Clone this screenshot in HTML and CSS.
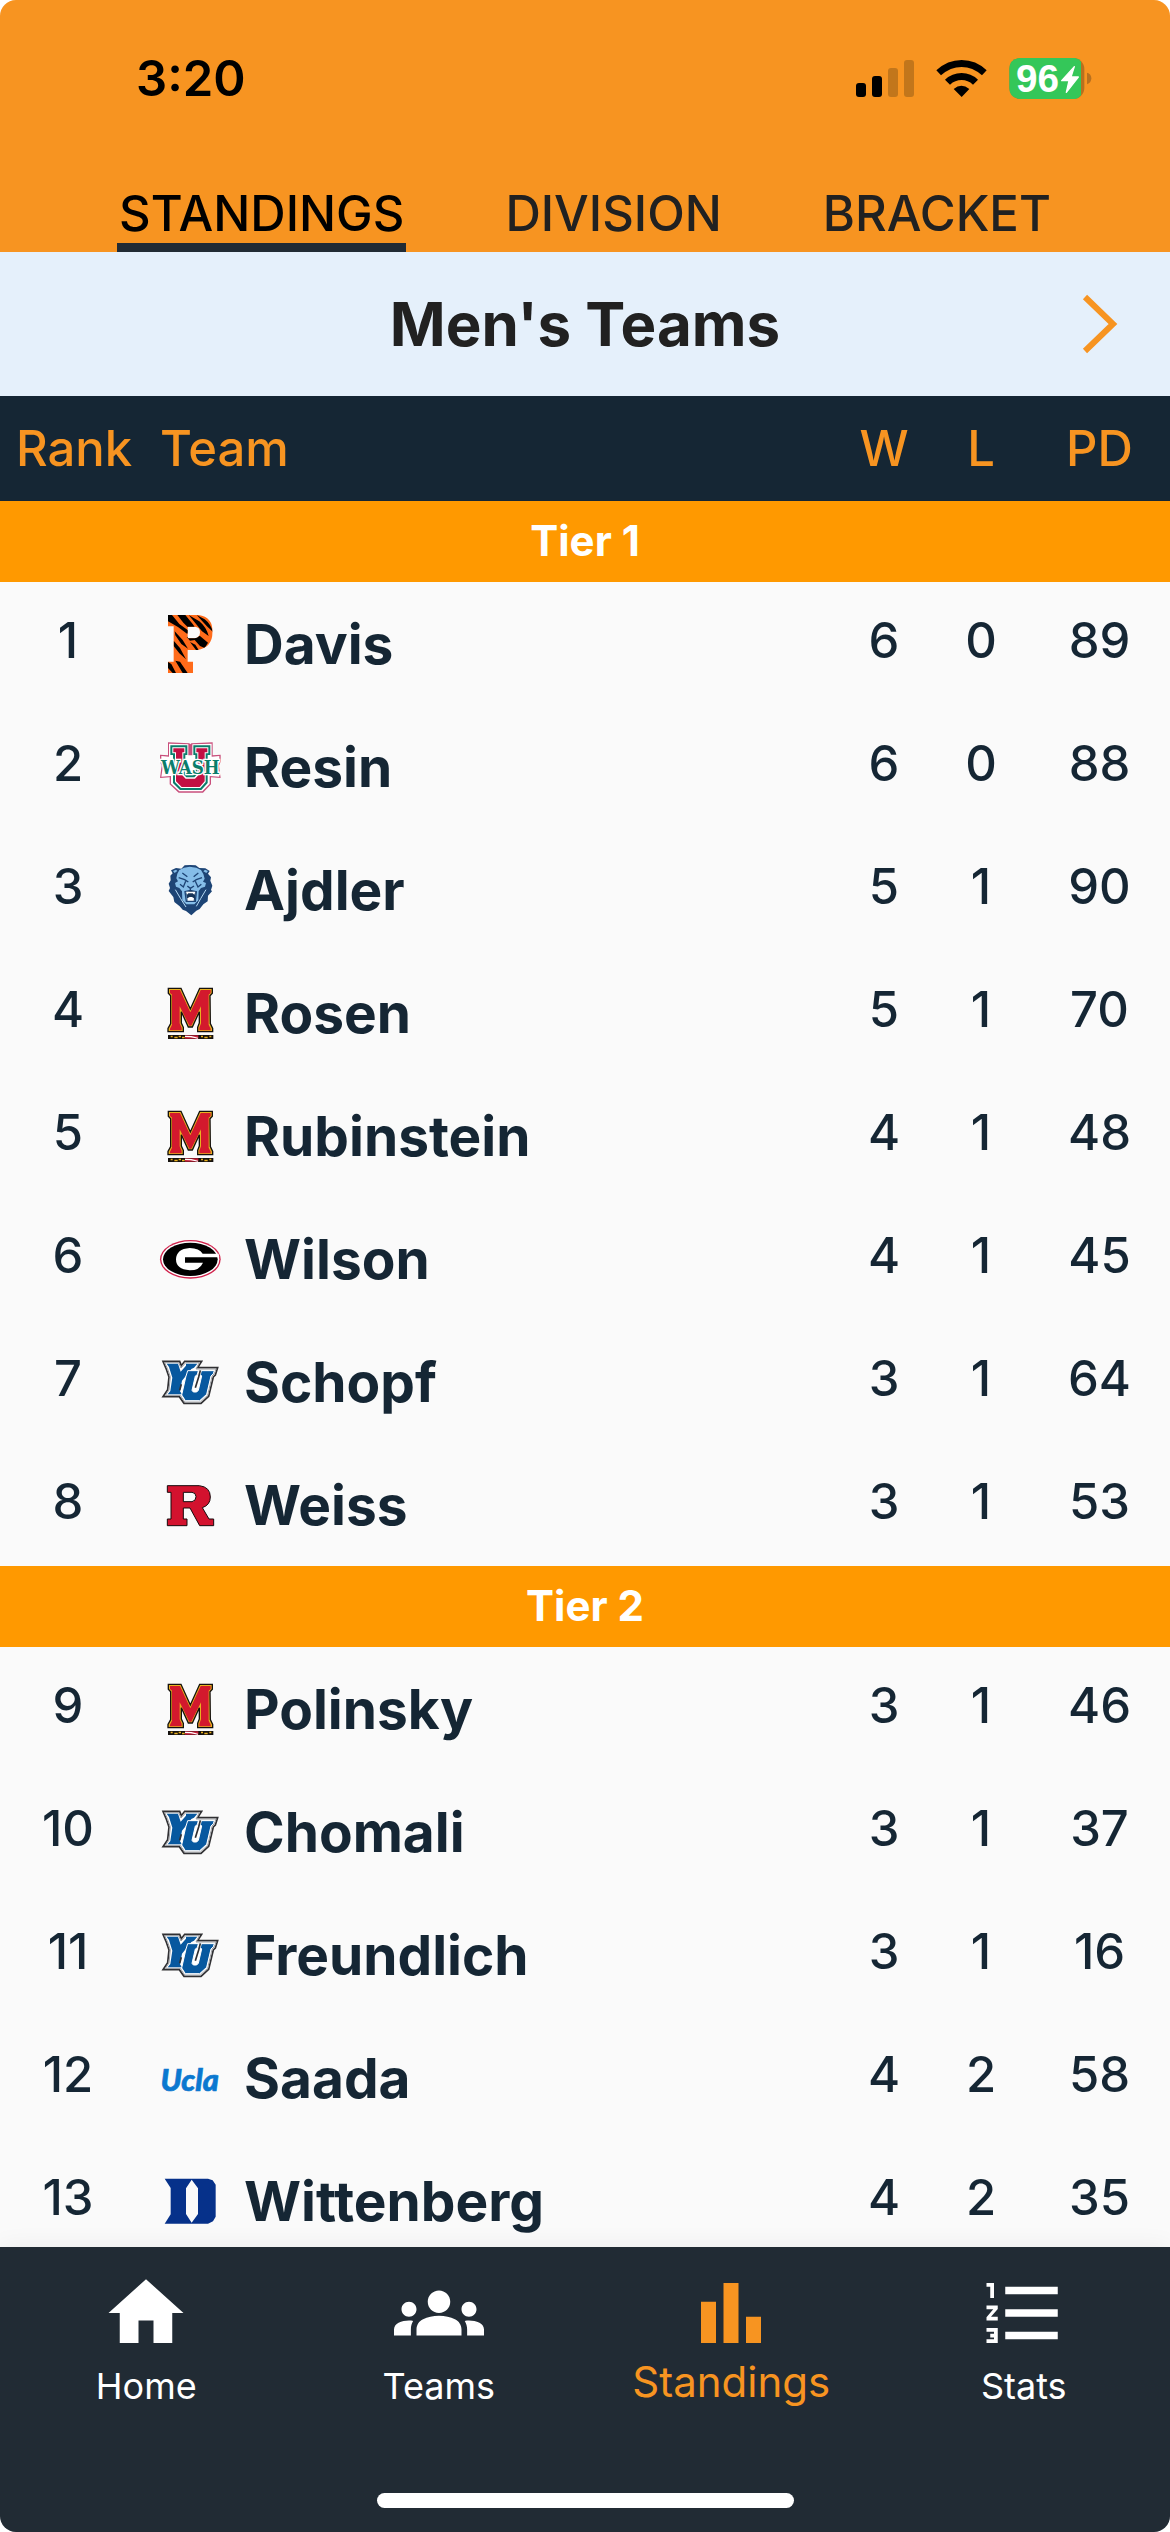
FILE: index.html
```html
<!DOCTYPE html>
<html lang="en">
<head>
<meta charset="utf-8">
<meta name="viewport" content="width=device-width, initial-scale=1">
<title>Standings</title>
<link rel="stylesheet" href="styles.css">
</head>
<body>
<svg class="sprite" aria-hidden="true">
  <symbol id="lion" viewBox="24 21 192 192">
    <path fill="#1d4475" d="M121 42L137 43L148 51L166 52L179 60L174 68L183 79L181 89L187 104L183 117L186 121L174 134L173 151L160 160L149 174L139 179L124 193L108 180L98 176L89 166L73 153L70 138L56 120L60 111L56 98L62 88L61 74L68 67L63 58L78 51L94 53L104 43Z"/>
    <path fill="#85bde8" d="M88 57L102 50L119 47L139 50L153 57L160 69L164 83L159 92L168 96L165 107L153 111L146 120L145 148L133 160H109L97 148L96 121L88 111L78 107L75 96L84 91L79 82L82 68ZM69 60L78 56L82 60L74 66ZM174 60L165 56L160 61L169 66Z"/>
    <g fill="none" stroke="#1d4475" stroke-width="4">
      <path d="M86 80L104 86L115 93M156 80L139 86L128 93M97 66L112 77M145 66L131 77M112 105L121 112L132 105M121 111V120M107 91L100 108L90 100M136 91L144 108L154 100M105 122L121 118L139 122L136 151H109Z"/>
    </g>
    <path fill="#173559" d="M108 123L122 119L137 123L134 149H112Z"/>
    <path fill="#fff" d="M108 122H136L133 131L128 127H115L111 131ZM112 142L119 138H126L132 142L131 149H113Z"/>
    <path fill="none" stroke="#b5d9f3" stroke-width="3" d="M76 116L92 143L108 168M168 116L152 143L139 166"/>
  </symbol>
  <symbol id="maryland" viewBox="24 390 192 192">
    <path fill="#e9b11f" stroke="#15110d" stroke-width="4" d="M55 412H93L121 474L149 412H187V427L180 434L181 518L188 532V542H143V529L148 516V482L127 528H115L94 482V516L100 529V542H54V532L62 518V434L55 427Z"/>
    <path fill="#d3192d" d="M60 417H90L121 484L152 417H182V426L176 431V521L182 533V538H148V530L153 517V466L124 524H118L89 466V517L95 530V538H60V533L66 521V431L60 426Z"/>
    <path fill="#15110d" d="M54 552H190V564H54Z"/>
    <path fill="#e9b11f" d="M62 554h6v5h-6zM73 557h10v5H73zM86 554h7v5h-7zM96 557h8v5h-8zM153 554h6v5h-6zM163 557h10v5h-10zM178 554h6v5h-6z"/>
    <path fill="#c9203a" d="M105 553H145V563H105Z"/>
    <path fill="#fff" d="M105 554L124 555L144 560V563L122 559L105 558Z"/>
  </symbol>
  <symbol id="yeshiva" viewBox="24 27 192 192">
    <path fill="#fff" stroke="#303033" stroke-width="5" d="M39 61H89L94 74L104 61H155L143 80H203L196 102L190 108L176 166L153 187H102L88 167H39L53 146L57 108L48 82Z"/>
    <path fill="none" stroke="#9a9da2" stroke-width="3" d="M44 65H86L93 81L107 65H148L138 84H198L192 99L186 105L173 163L151 183H104L91 163H46L57 147L61 107L52 82Z"/>
    <path fill="#07589f" d="M50 68H84L92 92L108 74V68H142L132 80L124 84L96 119L90 151L96 160H53L61 150L67 110L57 78Z"/>
    <path fill="#07589f" stroke="#fff" stroke-width="3" d="M113 89H145L142 101L136 105L126 148L130 153H140L145 148L155 105L151 101L154 89H193L190 98L183 105L170 160L149 179H106L95 162L108 105L110 99Z"/>
    <path fill="none" stroke="#303033" stroke-width="5" d="M151 88L146 108L136 140M94 130L89 148"/>
  </symbol>
</svg>

<div class="app">
  <header class="top">
    <div class="status">
      <span class="time">3:20</span>
      <svg class="status-icons" viewBox="48 51 708 123" role="img" aria-label="Signal, Wi-Fi, battery 96 percent charging">
        <rect x="48" y="126" width="30" height="42" rx="9"/>
        <rect x="96" y="105" width="30" height="63" rx="9"/>
        <g fill="#c2761b">
          <rect x="144" y="81" width="30" height="87" rx="9"/>
          <rect x="192" y="57" width="30" height="111" rx="9"/>
        </g>
        <path d="M289 88Q322 57 365 57Q408 57 440 88L426 103Q398 78 365 78Q331 78 303 103ZM315 116Q336 96 365 96Q393 96 414 116L399 131Q384 117 365 117Q345 117 330 131ZM341 144Q364 125 388 144L365 168Z"/>
        <rect x="508" y="51" width="225" height="123" rx="33" fill="#b8701f"/>
        <path fill="#34c759" d="M541 51H705Q717 53 723 62V163Q717 172 705 174H541Q508 172 508 141V84Q508 53 541 51Z"/>
        <path fill="#b8701f" d="M741 95Q754 99 754 112Q754 125 741 130Z"/>
        <text class="battery-text" x="528" y="153">96</text>
        <path fill="#fff" stroke="#fff" stroke-width="4" stroke-linejoin="round" d="M703 77L665 119H687L679 154L715 108H693Z"/>
      </svg>
    </div>
    <nav class="tabs" aria-label="Views">
      <a class="tab tab-active" href="#standings" aria-current="page">STANDINGS</a>
      <a class="tab" href="#division">DIVISION</a>
      <a class="tab" href="#bracket">BRACKET</a>
    </nav>
  </header>

  <section class="division">
    <h1>Men's Teams</h1>
    <button class="next" type="button" aria-label="Next division">
      <svg viewBox="0 0 36 60"><path d="M3 3L31 30L3 57"/></svg>
    </button>
  </section>

  <main class="scroll">
    <table class="standings">
      <colgroup><col class="c-rank"><col><col class="c-w"><col class="c-l"><col class="c-pd"></colgroup>
      <thead>
        <tr><th scope="col" class="rank">Rank</th><th scope="col" class="team">Team</th><th scope="col">W</th><th scope="col">L</th><th scope="col">PD</th></tr>
      </thead>
      <tbody>
        <tr class="tier"><th colspan="5" scope="rowgroup">Tier 1</th></tr>
        <tr><td>1</td><td class="team"><div><svg viewBox="24 34 192 192">
          <clipPath id="p-clip"><path clip-rule="evenodd" d="M54 43H146Q188 48 188 95Q186 142 142 148H113V183H129V217H54V183H71V77H54ZM113 78V113H134Q150 112 150 95Q150 79 134 78Z"/></clipPath>
          <g clip-path="url(#p-clip)">
            <path fill="#ff6b1a" d="M50 40H190V220H50Z"/>
            <path d="M54 43H66L88 70L116 90L112 100L84 79L54 62ZM82 43H106L128 70L138 84L116 82L100 66ZM116 43L148 62Q168 78 176 106L156 92L140 72ZM140 43L164 56Q182 70 189 94L170 76ZM110 109L150 106L174 126L164 142L150 136L134 118L120 120ZM120 124L136 132L146 148H138ZM74 92L98 118L114 144L94 130L76 104ZM71 120L90 142L108 176L88 158L71 136ZM76 180L90 183L113 217H98ZM54 184L64 190L78 217H68L54 202Z"/>
          </g></svg>Davis</div></td><td>6</td><td>0</td><td>89</td></tr>
        <tr><td>2</td><td class="team"><div><svg viewBox="24 402 192 192">
          <g stroke-linejoin="miter">
            <path fill="#c94f7c" d="M54 424L118 427L121 430L124 427L188 424V463L212 461V482L207 494L212 531L183 529V550L159 575H86L59 550V529L30 531L35 494L30 482V461L54 463Z"/>
            <path fill="#fff" d="M57 428L115 430V463H127V430L185 428V467L208 465V480L203 494L208 527L179 525V548L157 571H88L63 548V525L34 527L39 494L34 480V465L57 467Z"/>
            <path fill="#0b7d6c" d="M61 433H112V462H106V516L112 522H130L136 516V462H130V433H181V462H173V546L154 567H90L69 546V462H61Z"/>
            <path fill="#fff" d="M67 439H106V457H100V520L109 529H133L142 520V457H136V439H175V457H167V543L151 561H93L75 543V457H67Z"/>
            <path fill="#c20f43" d="M70 442H103V454H97V523L107 533H135L145 523V454H139V442H172V454H164V541L149 558H95L78 541V454H70Z"/>
          </g>
          <text class="wash-text" x="121" y="520" text-anchor="middle">WASH</text></svg>Resin</div></td><td>6</td><td>0</td><td>88</td></tr>
        <tr><td>3</td><td class="team"><div><svg><use href="#lion"/></svg>Ajdler</div></td><td>5</td><td>1</td><td>90</td></tr>
        <tr><td>4</td><td class="team"><div><svg><use href="#maryland"/></svg>Rosen</div></td><td>5</td><td>1</td><td>70</td></tr>
        <tr><td>5</td><td class="team"><div><svg><use href="#maryland"/></svg>Rubinstein</div></td><td>4</td><td>1</td><td>48</td></tr>
        <tr><td>6</td><td class="team"><div><svg viewBox="24 18 192 192">
          <ellipse cx="121" cy="115" rx="91" ry="58" fill="#d0204a"/>
          <ellipse cx="121" cy="115" rx="87" ry="54" fill="#fff"/>
          <ellipse cx="121" cy="115" rx="82" ry="50"/>
          <path fill="#fff" d="M158 98H206L208 109H105V125H159Q149 148 119 148Q78 145 78 115Q79 84 119 81Q148 82 158 98Z"/></svg>Wilson</div></td><td>4</td><td>1</td><td>45</td></tr>
        <tr><td>7</td><td class="team"><div><svg><use href="#yeshiva"/></svg>Schopf</div></td><td>3</td><td>1</td><td>64</td></tr>
        <tr><td>8</td><td class="team"><div><svg viewBox="24 396 192 192">
          <path fill="#d3122e" fill-rule="evenodd" stroke="#17090b" stroke-width="3" d="M52 434H148Q181 438 181 468Q181 492 157 500L177 534H191V554H149L120 501H100V534H111V554H52V534H63V454H52ZM100 454V482H126Q138 480 138 467Q138 455 126 454Z"/></svg>Weiss</div></td><td>3</td><td>1</td><td>53</td></tr>
      </tbody>
      <tbody>
        <tr class="tier"><th colspan="5" scope="rowgroup">Tier 2</th></tr>
        <tr><td>9</td><td class="team"><div><svg><use href="#maryland"/></svg>Polinsky</div></td><td>3</td><td>1</td><td>46</td></tr>
        <tr><td>10</td><td class="team"><div><svg><use href="#yeshiva"/></svg>Chomali</div></td><td>3</td><td>1</td><td>37</td></tr>
        <tr><td>11</td><td class="team"><div><svg><use href="#yeshiva"/></svg>Freundlich</div></td><td>3</td><td>1</td><td>16</td></tr>
        <tr><td>12</td><td class="team"><div><svg viewBox="24 16 192 192">
          <text class="ucla-text" x="119" y="150" text-anchor="middle">Ucla</text></svg>Saada</div></td><td>4</td><td>2</td><td>58</td></tr>
        <tr><td>13</td><td class="team"><div><svg viewBox="24 385 192 192">
          <path fill="#06318a" fill-rule="evenodd" d="M44 414H174L188 419L197 432V528L189 542L174 549H44L62 521V442ZM125 417L108 443V520L125 546L144 520V443Z"/></svg>Wittenberg</div></td><td>4</td><td>2</td><td>35</td></tr>
      </tbody>
    </table>
  </main>

  <footer class="bottom">
    <nav class="menu" aria-label="Main">
      <a href="#home"><svg viewBox="0 0 24 24"><path d="M10 20v-6h4v6h5v-8h3L12 3 2 12h3v8z"/></svg><span>Home</span></a>
      <a href="#teams"><svg viewBox="0 0 24 24"><path d="M12 12.75c1.63 0 3.07.39 4.24.9 1.08.48 1.76 1.56 1.76 2.73V18H6v-1.61c0-1.18.68-2.26 1.76-2.73 1.17-.52 2.61-.91 4.24-.91zM4 13c1.1 0 2-.9 2-2s-.9-2-2-2-2 .9-2 2 .9 2 2 2zm1.13 1.1c-.37-.06-.74-.1-1.13-.1-.99 0-1.93.21-2.78.58C.48 14.9 0 15.62 0 16.43V18h4.5v-1.61c0-.83.23-1.61.63-2.29zM20 13c1.1 0 2-.9 2-2s-.9-2-2-2-2 .9-2 2 .9 2 2 2zm4 3.43c0-.81-.48-1.53-1.22-1.85-.85-.37-1.79-.58-2.78-.58-.39 0-.76.04-1.13.1.4.68.63 1.46.63 2.29V18H24v-1.57zM12 6c1.66 0 3 1.34 3 3s-1.34 3-3 3-3-1.34-3-3 1.34-3 3-3z"/></svg><span>Teams</span></a>
      <a class="current" href="#standings" aria-current="page"><svg viewBox="0 0 24 24"><path d="M4 9h4v11H4zm12 4h4v7h-4zm-6-9h4v16h-4z"/></svg><span>Standings</span></a>
      <a href="#stats"><svg viewBox="0 0 24 24"><path d="M2 17h2v.5H3v1h1v.5H2v1h3v-4H2v1zm1-9h1V4H2v1h1v3zm-1 3h1.8L2 13.1v.9h3v-1H3.2L5 10.9V10H2v1zm5-6v2h14V5H7zm0 14h14v-2H7v2zm0-6h14v-2H7v2z"/></svg><span>Stats</span></a>
    </nav>
    <div class="indicator"></div>
  </footer>
</div>
</body>
</html>
```
FILE: styles.css
```css
* {
  box-sizing: border-box;
}

body {
  margin: 0;
  background: #fff;
  color: #152634;
  font-family: Inter, "Liberation Sans", sans-serif;
}

a {
  color: inherit;
  text-decoration: none;
}

.sprite {
  position: absolute;
  width: 0;
  height: 0;
}

.app {
  display: flex;
  flex-direction: column;
  height: 100vh;
  overflow: hidden;
  border-radius: 16px;
  background: #fafafa;
}

/* Status bar and tabs */
.top {
  background: #f79421;
}

.status {
  display: flex;
  justify-content: space-between;
  align-items: center;
  height: 156px;
  padding: 0 78px 0 136px;
}

.time {
  color: #000;
  font-size: 49px;
  font-weight: 600;
}

.status-icons {
  width: 236px;
  height: 41px;
}

.battery-text {
  fill: #fff;
  font-family: "Liberation Sans", sans-serif;
  font-size: 116px;
  font-weight: 700;
}

.tabs {
  display: flex;
  justify-content: center;
  gap: 97px;
  height: 96px;
}

.tab {
  padding: 28px 2px 0;
  border-bottom: 9px solid transparent;
  color: #212121;
  font-size: 49px;
  font-weight: 500;
  line-height: 60px;
}

.tab-active {
  border-color: #212b34;
  color: #000;
}

/* Division picker */
.division {
  display: grid;
  grid-template-columns: 1fr auto 1fr;
  align-items: center;
  height: 144px;
  background: #e5f0fb;
}

.division h1 {
  grid-column: 2;
  margin: 0;
  color: #212121;
  font-size: 60px;
  font-weight: 650;
}

.next {
  justify-self: end;
  display: flex;
  margin-right: 36px;
  padding: 16px;
  border: 0;
  background: none;
}

.next svg {
  width: 36px;
  height: 60px;
  fill: none;
  stroke: #f79421;
  stroke-width: 6;
}

/* Standings list */
.scroll {
  flex: 1;
  min-height: 0;
  overflow-y: auto;
  scrollbar-width: none;
}

.standings {
  width: 100%;
  table-layout: fixed;
  border-collapse: collapse;
  font-size: 49px;
  font-weight: 500;
}

.c-rank {
  width: 136px;
}

.c-w {
  width: 98px;
}

.c-l {
  width: 96px;
}

.c-pd {
  width: 141px;
}

.standings th {
  height: 105px;
  padding: 0;
  background: #152634;
  color: #f79421;
  font-weight: 500;
  text-align: center;
}

.standings thead .rank {
  padding-left: 16px;
  text-align: left;
}

.standings thead .team {
  padding-left: 24px;
  text-align: left;
}

.standings .tier th {
  height: 81px;
  padding-bottom: 2px;
  background: #ff9900;
  color: #fff;
  font-size: 42px;
  font-weight: 650;
}

.standings td {
  height: 123px;
  padding: 0 0 6px;
  text-align: center;
}

.standings td.team {
  padding: 0 0 0 22px;
  font-size: 55px;
  font-weight: 650;
}

.team div {
  display: flex;
  align-items: center;
  gap: 22px;
}

.team svg {
  flex: none;
  width: 64px;
  height: 64px;
}

.wash-text {
  fill: #0b7d6c;
  stroke: #fff;
  stroke-width: 8px;
  paint-order: stroke;
  font-family: "DejaVu Serif Condensed", "DejaVu Serif", serif;
  font-size: 56px;
  font-weight: 700;
}

.ucla-text {
  fill: #0b78d0;
  stroke: #0b78d0;
  stroke-width: 2px;
  font-family: Lato, sans-serif;
  font-size: 92px;
  font-style: italic;
  font-weight: 900;
}

/* Bottom navigation */
.bottom {
  z-index: 1;
  padding: 21px 0 24px;
  background: #212b34;
  color: #fff;
  box-shadow: 0 0 24px rgba(0, 0, 0, 0.06);
}

.menu {
  display: grid;
  grid-template-columns: repeat(4, 1fr);
  height: 225px;
}

.menu a {
  display: flex;
  flex-direction: column;
  align-items: center;
  font-size: 36px;
  line-height: 56px;
}

.menu .current {
  color: #f79421;
  font-size: 42px;
  line-height: 48px;
}

.menu svg {
  width: 90px;
  height: 90px;
  fill: currentColor;
}

.indicator {
  width: 417px;
  height: 15px;
  margin: 0 auto;
  border-radius: 8px;
  background: #fff;
}
```
